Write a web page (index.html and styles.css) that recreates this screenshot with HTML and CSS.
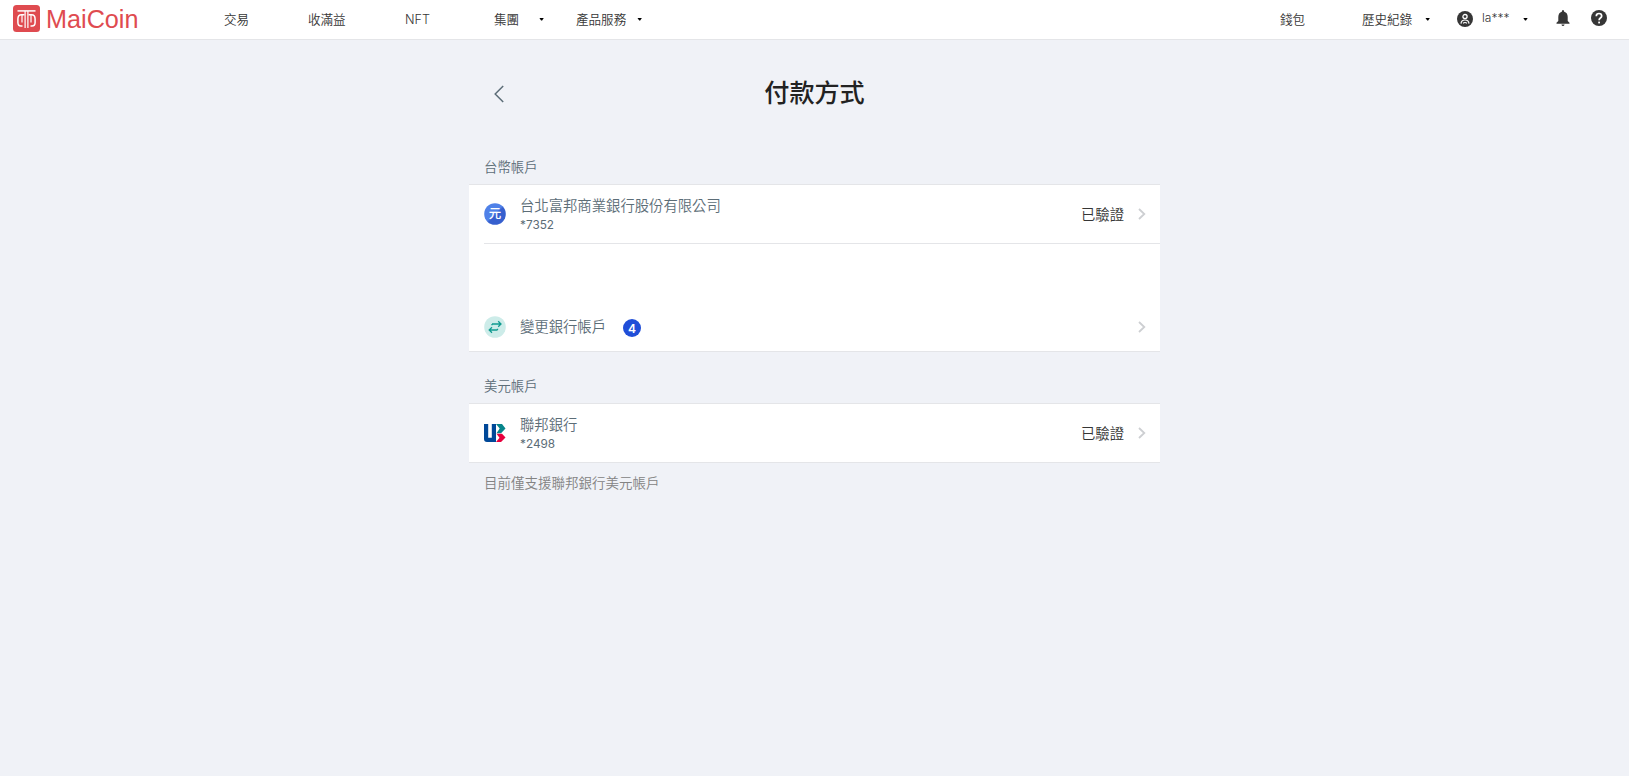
FILE: index.html
```
<!doctype html>
<html lang="zh-Hant">
<head>
<meta charset="utf-8">
<title>付款方式 - MaiCoin</title>
<link rel="stylesheet" href="styles.css">
</head>
<body>
<header class="navbar">
  <a class="logo">
    <svg class="logo-mark" viewBox="0 0 27 27">
      <rect width="27" height="27" rx="3.5" fill="#df4b50"/>
      <g fill="none" stroke="#fff" stroke-width="1.5">
        <path d="M4.5 5.9H22.5"/>
        <path d="M12.1 6V23M14.9 6V23" stroke-width="1.2"/>
        <path d="M11.5 9.8H8.5Q4.9 9.8 4.9 14V17.5Q4.9 21 8 21H9.5"/>
        <path d="M15.5 9.8H18.5Q22.1 9.8 22.1 14V17.5Q22.1 21 19 21H17.5"/>
        <path d="M9 10V17.5M18 10V17.5" stroke-width="1.2"/>
      </g>
    </svg>
    <svg class="logo-name" viewBox="0 0 92 27"><text x="-1" y="22.5" textLength="92.5" lengthAdjust="spacingAndGlyphs">MaiCoin</text></svg>
  </a>
  <nav class="menu">
    <a class="trade">交易</a>
    <a class="earn">收滿益</a>
    <a class="nft">NFT</a>
    <a class="group">集團<i class="caret"></i></a>
    <a class="products">產品服務<i class="caret"></i></a>
  </nav>
  <div class="menu menu-right">
    <a class="wallet">錢包</a>
    <a class="history">歷史紀錄<i class="caret"></i></a>
    <a class="user">
      <svg class="icon" viewBox="0 0 16 16">
        <circle cx="8" cy="8" r="8" fill="#363636"/>
        <circle cx="8" cy="5.6" r="2.1" fill="none" stroke="#fff" stroke-width="1.3"/>
        <path d="M4 12.6Q4.3 9 8 9T12 12.6M6 12.2Q8 10.8 10 12.2" fill="none" stroke="#fff" stroke-width="1.2"/>
      </svg>
      <span>la***</span><i class="caret"></i>
    </a>
    <svg class="bell" viewBox="0 0 14 16">
      <path d="M7 0Q8.2 0 8.2 1.7Q11.7 2.8 11.7 7V11L13.5 12.8V13.7H.5V12.8L2.3 11V7Q2.3 2.8 5.8 1.7Q5.8 0 7 0ZM5.4 14.5H8.6Q8.2 16 7 16T5.4 14.5Z" fill="#363636"/>
    </svg>
    <svg class="help" viewBox="0 0 16 16">
      <circle cx="8" cy="8" r="8" fill="#363636"/>
      <path d="M5.3 6.2Q5.3 3.5 8 3.5T10.7 6Q10.7 7 9.4 8T8.1 10.3" fill="none" stroke="#fff" stroke-width="1.7"/>
      <rect x="7.2" y="11.6" width="1.8" height="1.8" fill="#fff"/>
    </svg>
  </div>
</header>

<main class="container">
  <div class="page-head">
    <svg class="back" viewBox="0 0 10 18"><path d="M9.2 1L1.2 9L9.2 17" fill="none" stroke="#5c6d77" stroke-width="1.5"/></svg>
    <h1>付款方式</h1>
  </div>

  <h2 class="section-title">台幣帳戶</h2>
  <section class="card">
    <div class="row row-line">
      <svg class="bank-icon" viewBox="0 0 22 22">
        <defs><linearGradient id="coin" x1="0" y1="0" x2="1" y2="1"><stop offset=".48" stop-color="#4f81e8"/><stop offset=".54" stop-color="#365fce"/></linearGradient></defs>
        <circle cx="11" cy="11" r="10.8" fill="url(#coin)"/>
        <text class="coin-text" x="11" y="15.3" text-anchor="middle">元</text>
      </svg>
      <div class="bank">
        <div class="name">台北富邦商業銀行股份有限公司</div>
        <div class="number">*7352</div>
      </div>
      <span class="status">已驗證</span>
      <svg class="arrow" viewBox="0 0 8 12"><path d="M1 1L6.3 6L1 11" fill="none" stroke="#cdcfd2" stroke-width="1.8"/></svg>
    </div>
    <div class="row row-change">
      <svg class="bank-icon" viewBox="0 0 22 22">
        <circle cx="11" cy="11" r="10.8" fill="#cdece9"/>
        <path d="M8 8H16.8M14.2 5.2L17 8L14.2 10.8M13.5 14H5.2M8 11.2L5.2 14L8 16.8M8 8V9.3M13.5 14V12.7" fill="none" stroke="#109b90" stroke-width="1.3"/>
      </svg>
      <div class="name">變更銀行帳戶</div>
      <span class="badge">4</span>
      <svg class="arrow" viewBox="0 0 8 12"><path d="M1 1L6.3 6L1 11" fill="none" stroke="#cdcfd2" stroke-width="1.8"/></svg>
    </div>
  </section>

  <h2 class="section-title usd">美元帳戶</h2>
  <section class="card">
    <div class="row">
      <svg class="bank-icon" viewBox="0 0 22 22">
        <path d="M0 2H4.2V15.7H7.8V2H12V20H3Q0 20 0 17Z" fill="#004898"/>
        <path d="M12 2H18L21.5 6.5L17 11.3H12.5L15.7 6.6Z" fill="#07858b"/>
        <path d="M12.5 11.7H18L21.5 15.5L17 20H12L15.5 15.8Z" fill="#e7003d"/>
      </svg>
      <div class="bank">
        <div class="name">聯邦銀行</div>
        <div class="number">*2498</div>
      </div>
      <span class="status">已驗證</span>
      <svg class="arrow" viewBox="0 0 8 12"><path d="M1 1L6.3 6L1 11" fill="none" stroke="#cdcfd2" stroke-width="1.8"/></svg>
    </div>
  </section>
  <p class="note">目前僅支援聯邦銀行美元帳戶</p>
</main>
</body>
</html>
```
FILE: styles.css
```
* {
  box-sizing: border-box;
}
body {
  margin: 0;
  min-height: 100vh;
  background: #f0f2f7;
  color: #363636;
  font-family: Inter, "Noto Sans CJK TC", sans-serif;
  font-size: 12.55px;
  font-weight: 350;
}
svg {
  display: block;
  flex-shrink: 0;
}

/* navbar */
.navbar {
  display: flex;
  height: 40px;
  padding: 0 22px 0 13px;
  background: #fff;
  border-bottom: 1px solid #e4e5e8;
}
.logo {
  display: flex;
  width: 211px;
  padding-top: 5px;
}
.logo-mark {
  width: 27px;
  height: 27px;
}
.logo-name {
  width: 92px;
  height: 27px;
  margin-left: 7px;
  overflow: visible;
  font-family: "Liberation Sans", Arial, sans-serif;
  font-size: 26px;
  font-weight: 400;
  fill: #df4b50;
}
.menu {
  display: flex;
  align-items: center;
  height: 39px;
  line-height: 20px;
  white-space: nowrap;
}
.menu a {
  display: flex;
  align-items: center;
}
.menu-right {
  margin-left: auto;
}
.trade { width: 84px; }
.earn { width: 97px; }
.nft { width: 89px; }
.group { width: 82px; }
.caret {
  width: 5px;
  height: 3px;
  margin-top: -1px;
  background: #000;
  clip-path: polygon(0 0, 100% 0, 60% 100%, 40% 100%);
}
.group .caret { margin-left: 20px; }
.products .caret { margin-left: 11px; }
.wallet { width: 82px; }
.history { width: 95px; }
.history .caret { margin-left: 13px; }
.user { width: 99px; }
.icon {
  width: 16px;
  height: 16px;
  margin-top: -1px;
}
.user span {
  width: 41px;
  margin: -4px 0 0 9px;
  font-size: 12px;
}
.bell {
  width: 14px;
  height: 16px;
  margin-top: -4px;
}
.help {
  width: 16px;
  height: 16px;
  margin: -4px 0 0 21px;
}

/* content */
.container {
  width: 691px;
  margin: 0 auto;
}
.page-head {
  display: flex;
  align-items: center;
  height: 107px;
  padding: 0 35px 0 25px;
}
.page-head h1 {
  flex: 1;
  margin: -1px 0 0;
  color: #222;
  font-size: 25.1px;
  font-weight: 500;
  line-height: 36px;
  text-align: center;
}
.back {
  width: 10px;
  height: 18px;
}
.section-title {
  height: 37px;
  margin: 0;
  padding-left: 15px;
  color: #5c6d77;
  font-size: 13.4px;
  font-weight: 350;
  line-height: 40px;
}
.section-title.usd {
  height: 51px;
  line-height: 68px;
}
.card {
  padding-left: 15px;
  background: #fff;
  border-top: 1px solid #e4e5e8;
  border-bottom: 1px solid #e4e5e8;
}
.row {
  display: flex;
  align-items: center;
  height: 58px;
  padding-right: 14px;
}
.row-line {
  height: 59px;
  border-bottom: 1px solid #e4e5e8;
}
.row-change {
  height: 49px;
  margin-top: 58px;
}
.bank-icon {
  width: 22px;
  height: 22px;
  margin-right: 14px;
}
.coin-text {
  fill: #fff;
  font-size: 12.5px;
  font-weight: 500;
}
.bank {
  padding-top: 2px;
}
.name {
  color: #5c6d77;
  font-size: 14.35px;
  line-height: 20px;
}
.number {
  color: #5c6d77;
  font-size: 11.8px;
  font-weight: 400;
  line-height: 19px;
}
.badge {
  width: 18px;
  height: 18px;
  margin: 3px 0 0 17px;
  border-radius: 50%;
  background: #204ed8;
  color: #fff;
  font-size: 12px;
  font-weight: 600;
  line-height: 19px;
  text-align: center;
}
.status {
  margin-left: auto;
  padding-bottom: 2px;
  font-size: 14.35px;
}
.arrow {
  width: 8px;
  height: 12px;
  margin-left: 14px;
}
.badge + .arrow {
  margin-left: auto;
}
.note {
  margin: 0;
  padding-left: 15px;
  color: #838383;
  font-size: 13.5px;
  line-height: 40px;
}
```
